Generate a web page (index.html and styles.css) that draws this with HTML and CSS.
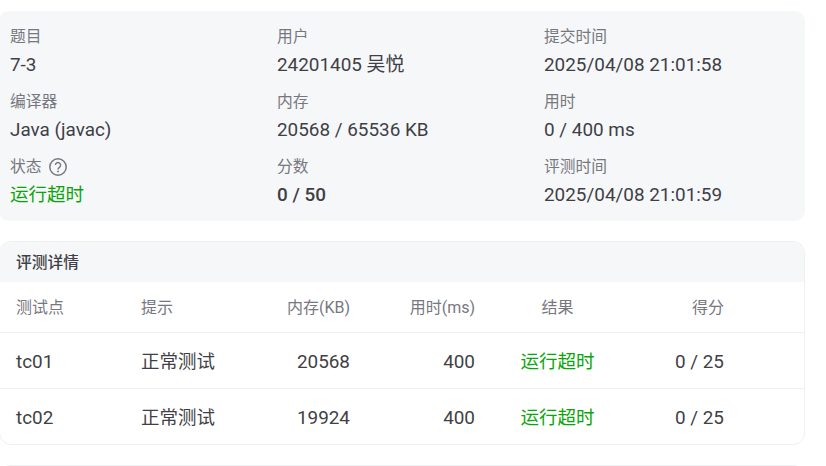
FILE: index.html
```html
<!DOCTYPE html>
<html lang="zh-CN">
<head>
<meta charset="utf-8">
<title>提交详情</title>
<link rel="stylesheet" href="styles.css">
</head>
<body>
<main class="page">
  <section class="summary">
    <div class="field"><div class="label">题目</div><div class="value">7-3</div></div>
    <div class="field"><div class="label">用户</div><div class="value">24201405 吴悦</div></div>
    <div class="field"><div class="label">提交时间</div><div class="value">2025/04/08 21:01:58</div></div>
    <div class="field"><div class="label">编译器</div><div class="value">Java (javac)</div></div>
    <div class="field"><div class="label">内存</div><div class="value">20568 / 65536 KB</div></div>
    <div class="field"><div class="label">用时</div><div class="value">0 / 400 ms</div></div>
    <div class="field">
      <div class="label">状态
        <svg class="help" viewBox="0 0 18 18" width="18" height="18" aria-hidden="true">
          <circle cx="9" cy="9" r="8.2" fill="none" stroke="currentColor" stroke-width="1.5"/>
          <path d="M6.4 7.1a2.6 2.6 0 1 1 4 2.2c-.9.6-1.4 1-1.4 2.1" fill="none" stroke="currentColor" stroke-width="1.4"/>
          <circle cx="9" cy="13.4" r=".95" fill="currentColor"/>
        </svg>
      </div>
      <div class="value status">运行超时</div>
    </div>
    <div class="field"><div class="label">分数</div><div class="value score">0 / 50</div></div>
    <div class="field"><div class="label">评测时间</div><div class="value">2025/04/08 21:01:59</div></div>
  </section>

  <section class="details">
    <h2 class="details-title">评测详情</h2>
    <div class="row head">
      <div class="c-name">测试点</div><div class="c-hint">提示</div><div class="c-mem">内存(KB)</div><div class="c-time">用时(ms)</div><div class="c-res">结果</div><div class="c-score">得分</div>
    </div>
    <div class="row body-row">
      <div class="c-name">tc01</div><div class="c-hint">正常测试</div><div class="c-mem">20568</div><div class="c-time">400</div><div class="c-res status">运行超时</div><div class="c-score">0 / 25</div>
    </div>
    <div class="row body-row">
      <div class="c-name">tc02</div><div class="c-hint">正常测试</div><div class="c-mem">19924</div><div class="c-time">400</div><div class="c-res status">运行超时</div><div class="c-score">0 / 25</div>
    </div>
  </section>
  <div class="next-card"></div>
</main>
</body>
</html>
```
FILE: styles.css
```css
* { box-sizing: border-box; }
html, body { margin: 0; height: 466px; overflow: hidden; background: #fff; }
body {
  font-family: Roboto, "Noto Sans CJK SC", sans-serif;
  color: #3f3f46;
}
.page {
  width: 806px;
  margin-left: -1px;
  padding-top: 11px;
}
.summary {
  height: 210px;
  background: #f6f7f9;
  border-radius: 10px;
  padding: 14px 11px 0;
  display: grid;
  grid-template-columns: repeat(3, 267px);
  grid-auto-rows: 65px;
}
.label {
  display: flex;
  align-items: center;
  gap: 7px;
  height: 24px;
  font-size: 15.75px;
  line-height: 24px;
  color: #77777f;
}
.help { color: #77777f; }
.value {
  margin-top: 2px;
  height: 28px;
  font-size: 18.9px;
  line-height: 28px;
}
.score { font-weight: 500; }
.status { color: #0aa50a; font-size: 18.5px; }
.details {
  margin-top: 20px;
  height: 204px;
  border: 1px solid #eeeff1;
  border-radius: 12px;
  overflow: hidden;
}
.details-title {
  margin: 0;
  height: 40px;
  padding-left: 16px;
  background: #f6f7f9;
  font-size: 15.75px;
  font-weight: 500;
  line-height: 42px;
  color: #3f3f46;
}
.row {
  display: grid;
  grid-template-columns: 125px 114px 95px 125px 165px 84px;
  align-items: center;
  padding-left: 16px;
  line-height: 28px;
}
.row.head {
  height: 50px;
  padding-top: 2px;
  font-size: 16px;
  color: #77777f;
}
.body-row {
  height: 56px;
  padding-top: 3px;
  border-top: 1px solid #eeeff1;
  font-size: 18.9px;
}
.body-row:last-child { height: 55px; padding-top: 4px; }
.body-row .c-hint { font-size: 18.5px; }
.c-mem, .c-time, .c-score { text-align: right; }
.c-res { text-align: center; }
.next-card {
  margin-top: 20px;
  height: 12px;
  border-top: 1px solid #eeeff1;
  border-radius: 12px 12px 0 0;
}
```
